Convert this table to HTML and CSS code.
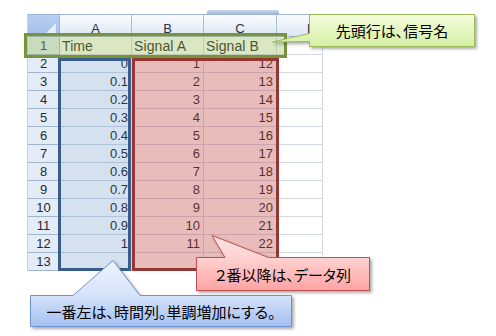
FILE: index.html
```html
<!DOCTYPE html>
<html lang="ja">
<head>
<meta charset="utf-8">
<link rel="stylesheet" href="styles.css">
</head>
<body>
<div class="page">
  <div class="tab"></div>
  <div class="sheet">
    <div class="corner"><span class="tri"></span></div>
    <div class="ch">A</div><div class="ch">B</div><div class="ch">C</div><div class="ch chd">D</div>

    <div class="rh">1</div><div class="c t">Time</div><div class="c t">Signal A</div><div class="c t">Signal B</div><div class="c"></div>
    <div class="rh">2</div><div class="c">0</div><div class="c">1</div><div class="c">12</div><div class="c"></div>
    <div class="rh">3</div><div class="c">0.1</div><div class="c">2</div><div class="c">13</div><div class="c"></div>
    <div class="rh">4</div><div class="c">0.2</div><div class="c">3</div><div class="c">14</div><div class="c"></div>
    <div class="rh">5</div><div class="c">0.3</div><div class="c">4</div><div class="c">15</div><div class="c"></div>
    <div class="rh">6</div><div class="c">0.4</div><div class="c">5</div><div class="c">16</div><div class="c"></div>
    <div class="rh">7</div><div class="c">0.5</div><div class="c">6</div><div class="c">17</div><div class="c"></div>
    <div class="rh">8</div><div class="c">0.6</div><div class="c">7</div><div class="c">18</div><div class="c"></div>
    <div class="rh">9</div><div class="c">0.7</div><div class="c">8</div><div class="c">19</div><div class="c"></div>
    <div class="rh">10</div><div class="c">0.8</div><div class="c">9</div><div class="c">20</div><div class="c"></div>
    <div class="rh">11</div><div class="c">0.9</div><div class="c">10</div><div class="c">21</div><div class="c"></div>
    <div class="rh">12</div><div class="c">1</div><div class="c">11</div><div class="c">22</div><div class="c"></div>
    <div class="rh">13</div><div class="c"></div><div class="c"></div><div class="c"></div><div class="c"></div>
  </div>

  <div class="frame frame-green"></div>
  <div class="frame frame-blue"></div>
  <div class="frame frame-red"></div>

  <div class="callout callout-green">
    <svg class="shape" width="203" height="33" viewBox="0 0 203 33">
      <defs>
        <linearGradient id="gg" x1="0" y1="0" x2="0" y2="1">
          <stop offset="0" stop-color="#f3fcdc"/>
          <stop offset="1" stop-color="#d6efa4"/>
        </linearGradient>
      </defs>
      <path d="M37.5,0.5 H202.5 V32.5 H37.5 V27.5 L0.5,28 L37.5,19.5 Z" fill="url(#gg)" stroke="#9bbb59" stroke-width="1"/>
    </svg>
    <span class="label">先頭行は、信号名</span>
  </div>

  <div class="callout callout-red">
    <svg class="shape" width="174" height="56" viewBox="0 0 174 56">
      <defs>
        <linearGradient id="rg" x1="0" y1="0" x2="0" y2="1">
          <stop offset="0" stop-color="#ffe3e3"/>
          <stop offset="0.4" stop-color="#ffd2d2"/>
          <stop offset="1" stop-color="#ffa3a3"/>
        </linearGradient>
      </defs>
      <path d="M0.5,22.5 H29 L16,0.5 L72.5,22.5 H173.5 V55.5 H0.5 Z" fill="url(#rg)" stroke="#c0504d" stroke-width="1"/>
    </svg>
    <span class="label">２番以降は、データ列</span>
  </div>

  <div class="callout callout-blue">
    <svg class="shape" width="262" height="67" viewBox="0 0 262 67">
      <defs>
        <linearGradient id="bg" x1="0" y1="0" x2="0" y2="1">
          <stop offset="0" stop-color="#eef3fd"/>
          <stop offset="0.52" stop-color="#d6e3fa"/>
          <stop offset="1" stop-color="#a3c0f1"/>
        </linearGradient>
      </defs>
      <path d="M0.5,35.5 H43 L83,0.5 L110,35.5 H261.5 V66.5 H0.5 Z" fill="url(#bg)" stroke="#6d92cf" stroke-width="1"/>
    </svg>
    <span class="label">一番左は、時間列。単調増加にする。</span>
  </div>
</div>
</body>
</html>
```

FILE: styles.css
```css
html, body {
  margin: 0;
  padding: 0;
  background: #ffffff;
}

.page {
  position: relative;
  width: 496px;
  height: 336px;
  padding-top: 10px;
  box-sizing: border-box;
  overflow: hidden;
  font-family: "Liberation Sans", Arial, sans-serif;
  color: #1a1a1a;
}

.tab {
  margin-left: 207px;
  width: 72px;
  height: 4px;
  border-radius: 2px 2px 0 0;
  background: linear-gradient(#c8d8ee, #9fbbe0);
}

.sheet {
  display: grid;
  grid-template-columns: 32px 72px 72px 73px 46px;
  grid-template-rows: 22px repeat(13, 18px);
  margin-left: 27px;
  width: 296px;
  border-top: 1px solid #9db4d3;
  border-left: 1px solid #c5d3e6;
  box-sizing: border-box;
}

.sheet > div {
  box-sizing: border-box;
  overflow: hidden;
  white-space: nowrap;
}

.corner {
  position: relative;
  background: linear-gradient(#b9cff0, #a3bfe8);
  border-right: 1px solid #9eb6ce;
  border-bottom: 1px solid #9eb6ce;
}

.tri {
  position: absolute;
  right: 3px;
  bottom: 3px;
  width: 0;
  height: 0;
  border-left: 10px solid transparent;
  border-bottom: 10px solid #e8eef8;
}

.ch {
  display: flex;
  align-items: flex-end;
  justify-content: center;
  font-size: 13px;
  line-height: 15px;
  color: #27354a;
  background: linear-gradient(#fbfcfe, #eaf0f8 55%, #dbe5f2);
  border-right: 1px solid #a9bed8;
  border-bottom: 1px solid #9eb6ce;
}

.chd {
  justify-content: flex-start;
  padding-left: 30px;
}

.rh {
  display: flex;
  align-items: center;
  justify-content: center;
  font-size: 13px;
  color: #1f2a3a;
  background: #e4ecf7;
  border-right: 1px solid #9eb6ce;
  border-bottom: 1px solid #9eb6ce;
}

.c {
  display: flex;
  align-items: center;
  justify-content: flex-end;
  padding: 0 3px 0 2px;
  font-size: 13px;
  border-right: 1px solid #d0d7e5;
  border-bottom: 1px solid #d0d7e5;
}

.c.t {
  justify-content: flex-start;
  font-size: 14px;
  letter-spacing: 0.1px;
}

.frame {
  position: absolute;
  box-sizing: border-box;
  border: 3px solid;
}

.frame-green {
  left: 24px;
  top: 33px;
  width: 263px;
  height: 25px;
  border-color: #77933c;
  background: rgba(155, 187, 89, 0.36);
}

.frame-blue {
  left: 58px;
  top: 58px;
  width: 73px;
  height: 213px;
  border-color: #385d8a;
  background: rgba(79, 129, 189, 0.24);
}

.frame-red {
  left: 132px;
  top: 58px;
  width: 147px;
  height: 213px;
  border-color: #953735;
  background: rgba(192, 80, 77, 0.38);
}

.callout {
  position: absolute;
  display: flex;
  align-items: center;
  justify-content: center;
  isolation: isolate;
  font-family: "Noto Sans CJK JP", "Liberation Sans", sans-serif;
  font-size: 15px;
  line-height: 1;
  color: #000000;
  font-feature-settings: "palt";
}

.shape {
  position: absolute;
  z-index: -1;
  overflow: visible;
  filter: drop-shadow(2px 2px 1.5px rgba(0, 0, 0, 0.32));
}

.label {
  position: relative;
}

.callout-green {
  left: 309px;
  top: 14px;
  width: 166px;
  height: 33px;
}

.callout-green .shape {
  left: -37px;
  top: 0;
}

.callout-red {
  left: 196px;
  top: 257px;
  width: 174px;
  height: 34px;
}

.callout-red .shape {
  left: 0;
  top: -22px;
}

.callout-blue {
  left: 30px;
  top: 295px;
  width: 262px;
  height: 32px;
}

.callout-blue .shape {
  left: 0;
  top: -35px;
}
```
